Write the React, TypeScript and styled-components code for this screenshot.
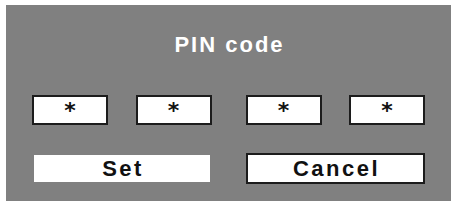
import React from 'react';
import styled, { createGlobalStyle } from 'styled-components';

const GlobalStyle = createGlobalStyle`
  html, body {
    margin: 0;
    padding: 0;
    background: #ffffff;
  }
  body {
    font-family: "Liberation Sans", Arial, sans-serif;
  }
`;

// gray OSD panel
const Panel = styled.div`
  margin: 5px 3px 0 6px;
  height: 196px;
  background: #808080;
  padding: 27px 26px 0;
  box-sizing: border-box;
  display: flex;
  flex-direction: column;
`;

const Title = styled.div`
  color: #ffffff;
  font-size: 22px;
  font-weight: bold;
  line-height: 26px;
  letter-spacing: 2px;
  text-align: center;
  padding-left: 2px;
`;

const Row = styled.div<{ $top: number }>`
  display: grid;
  grid-template-columns: 1fr 1fr;
  column-gap: 34px;
  margin-top: ${(p) => p.$top}px;
`;

const Pair = styled.div`
  display: flex;
  justify-content: space-between;
`;

const DigitBox = styled.div`
  width: 76px;
  height: 30px;
  box-sizing: border-box;
  border: 2px solid #1c1c1c;
  background: #ffffff;
  display: flex;
  justify-content: center;
  align-items: flex-start;
  padding-top: 3px;
`;

const Star = styled.span`
  font-family: "DejaVu Sans", sans-serif;
  font-weight: bold;
  font-size: 22px;
  line-height: 22px;
  color: #111111;
`;

const Button = styled.div<{ $framed?: boolean }>`
  height: 31px;
  box-sizing: border-box;
  border: 2px solid ${(p) => (p.$framed ? '#1c1c1c' : '#808080')};
  background: #ffffff;
  color: #111111;
  font-size: 22px;
  font-weight: bold;
  letter-spacing: 2.5px;
  padding-left: 2.5px;
  display: flex;
  align-items: center;
  justify-content: center;
`;

const digits = ['*', '*', '*', '*'];

export default function App() {
  return (
    <>
      <GlobalStyle />
      <Panel>
        <Title>PIN code</Title>
        <Row $top={37}>
          <Pair>
            <DigitBox><Star>{digits[0]}</Star></DigitBox>
            <DigitBox><Star>{digits[1]}</Star></DigitBox>
          </Pair>
          <Pair>
            <DigitBox><Star>{digits[2]}</Star></DigitBox>
            <DigitBox><Star>{digits[3]}</Star></DigitBox>
          </Pair>
        </Row>
        <Row $top={28}>
          <Button>Set</Button>
          <Button $framed>Cancel</Button>
        </Row>
      </Panel>
    </>
  );
}
